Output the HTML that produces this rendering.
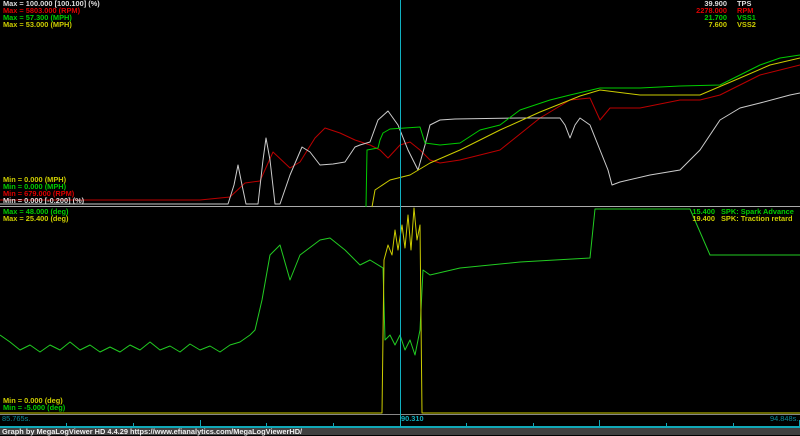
<!DOCTYPE html>
<html><head><style>
body{margin:0;width:800px;height:435px;background:#000;overflow:hidden;font-family:"Liberation Sans",sans-serif;font-size:7.4px;font-weight:bold;position:relative}
.t{position:absolute;line-height:8px;white-space:pre}
.r{text-align:right;width:60px}
</style></head><body>
<svg width="800" height="435" style="position:absolute;left:0;top:0">
<line x1="0" y1="206.5" x2="800" y2="206.5" stroke="#aaa"/>
<line x1="0" y1="414.5" x2="800" y2="414.5" stroke="#888"/>
<line x1="0" y1="427" x2="800" y2="427" stroke="#10a8b8" stroke-width="2"/>
<rect x="0" y="428" width="800" height="7" fill="#404040"/>
<g stroke="#10a8b8" stroke-width="1">
<line x1="66.5" y1="423" x2="66.5" y2="427"/><line x1="133.5" y1="423" x2="133.5" y2="427"/><line x1="200.5" y1="420" x2="200.5" y2="427"/><line x1="266.5" y1="423" x2="266.5" y2="427"/><line x1="333.5" y1="423" x2="333.5" y2="427"/><line x1="466.5" y1="423" x2="466.5" y2="427"/><line x1="533.5" y1="423" x2="533.5" y2="427"/><line x1="599.5" y1="420" x2="599.5" y2="427"/><line x1="666.5" y1="423" x2="666.5" y2="427"/><line x1="733.5" y1="423" x2="733.5" y2="427"/><line x1="799.5" y1="420" x2="799.5" y2="427"/>
</g>
<g fill="none" stroke-width="1" stroke-linejoin="round">
<polyline stroke="#b00" points="0,200 200,200 230,197 245,183 260,181 273,152 290,168 300,162 315,138 325,128 340,133 355,140 370,145 380,150 388,158 400,145 410,142 420,150 430,160 440,163 460,160 500,150 540,118 570,100 590,98 600,120 610,108 640,108 680,100 700,100 720,95 740,85 760,75 780,70 800,65"/>
<polyline stroke="#ccc" points="0,204 228,204 234,185 238,165 242,185 246,204 258,204 263,160 266,138 270,160 275,204 280,204 290,175 302,147 310,152 320,165 333,164 345,162 355,147 360,145 370,142 378,120 388,111 398,125 408,150 418,170 425,145 430,125 440,120 455,119 520,118 560,118 565,125 570,138 575,125 580,118 590,125 600,150 608,170 612,185 620,182 650,175 680,170 700,150 720,120 740,108 760,103 790,95 800,93"/>
<polyline stroke="#0c0" points="366,207 367,150 378,148 380,140 383,133 390,129 420,127 425,143 440,145 460,143 480,130 500,125 520,110 550,100 570,95 600,88 640,88 680,86 720,85 740,75 760,65 780,58 800,55"/>
<polyline stroke="#cc0" points="372,207 375,190 390,180 410,175 430,163 460,150 500,130 540,112 580,96 600,90 640,95 700,95 740,78 770,65 800,58"/>
<polyline stroke="#2c2" points="0,335 10,342 20,350 30,345 40,352 50,345 60,350 70,342 80,350 90,345 100,352 110,347 120,352 130,345 140,350 150,342 160,350 170,346 180,352 190,344 200,350 210,346 220,352 230,345 240,342 250,335 255,330 262,300 270,255 280,245 290,280 300,255 320,240 330,238 345,250 360,265 370,260 383,268 385,340 390,335 395,345 400,335 405,350 410,340 415,355 418,340 420,330 423,270 430,275 460,268 520,262 590,258 595,209 690,209 710,255 800,255"/>
<polyline stroke="#cc0" points="0,413 382,413 384,260 388,245 392,255 395,230 398,250 402,225 405,248 408,215 411,250 414,208 417,240 420,225 422,413 800,413"/>
</g>
<line x1="400.5" y1="0" x2="400.5" y2="427" stroke="#10b0c0"/>
</svg>
<div class="t" style="left:3px;top:0px;color:#ddd">Max = 100.000 [100.100] (%)</div>
<div class="t" style="left:3px;top:7px;color:#d00">Max = 5803.000 (RPM)</div>
<div class="t" style="left:3px;top:14px;color:#0c0">Max = 57.300 (MPH)</div>
<div class="t" style="left:3px;top:21px;color:#cc0">Max = 53.000 (MPH)</div>
<div class="t r" style="left:667px;top:0px;color:#ddd">39.900</div><div class="t" style="left:737px;top:0px;color:#ddd">TPS</div>
<div class="t r" style="left:667px;top:7px;color:#d00">2278.000</div><div class="t" style="left:737px;top:7px;color:#d00">RPM</div>
<div class="t r" style="left:667px;top:14px;color:#0c0">21.700</div><div class="t" style="left:737px;top:14px;color:#0c0">VSS1</div>
<div class="t r" style="left:667px;top:21px;color:#cc0">7.600</div><div class="t" style="left:737px;top:21px;color:#cc0">VSS2</div>
<div class="t" style="left:3px;top:176px;color:#cc0">Min = 0.000 (MPH)</div>
<div class="t" style="left:3px;top:183px;color:#0c0">Min = 0.000 (MPH)</div>
<div class="t" style="left:3px;top:190px;color:#d00">Min = 679.000 (RPM)</div>
<div class="t" style="left:3px;top:197px;color:#ddd">Min = 0.000 [-0.200] (%)</div>
<div class="t" style="left:3px;top:208px;color:#0c0">Max = 48.000 (deg)</div>
<div class="t" style="left:3px;top:215px;color:#cc0">Max = 25.400 (deg)</div>
<div class="t r" style="left:655px;top:208px;color:#0c0">15.400</div><div class="t" style="left:721px;top:208px;color:#0c0">SPK: Spark Advance</div>
<div class="t r" style="left:655px;top:215px;color:#cc0">19.400</div><div class="t" style="left:721px;top:215px;color:#cc0">SPK: Traction retard</div>
<div class="t" style="left:3px;top:397px;color:#cc0">Min = 0.000 (deg)</div>
<div class="t" style="left:3px;top:404px;color:#0c0">Min = -5.000 (deg)</div>
<div class="t" style="left:2px;top:415px;color:#0a8a98;font-weight:normal">85.765s.</div>
<div class="t" style="left:401px;top:415px;color:#10b0c0">90.310</div>
<div class="t" style="left:770px;top:415px;color:#0a8a98;font-weight:normal">94.848s.</div>
<div class="t" style="left:2px;top:428px;color:#eee;line-height:7px">Graph by MegaLogViewer HD 4.4.29 https://www.efianalytics.com/MegaLogViewerHD/</div>
</body></html>
